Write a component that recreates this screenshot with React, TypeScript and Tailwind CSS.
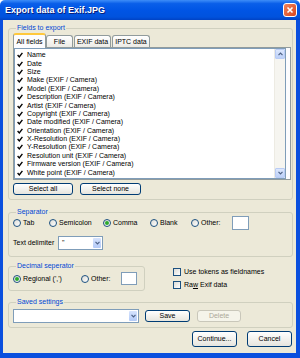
import React from 'react';

const fields = [
  'Name',
  'Date',
  'Size',
  'Make (EXIF / Camera)',
  'Model (EXIF / Camera)',
  'Description (EXIF / Camera)',
  'Artist (EXIF / Camera)',
  'Copyright (EXIF / Camera)',
  'Date modified (EXIF / Camera)',
  'Orientation (EXIF / Camera)',
  'X-Resolution (EXIF / Camera)',
  'Y-Resolution (EXIF / Camera)',
  'Resolution unit (EXIF / Camera)',
  'Firmware version (EXIF / Camera)',
  'White point (EXIF / Camera)',
];

function Check() {
  return (
    <svg width="6" height="6" viewBox="0 0 6 6" className="shrink-0">
      <path d="M0.6 3.1 L2.3 4.9 L5.4 0.9" fill="none" stroke="#000" strokeWidth="1.4" />
    </svg>
  );
}

function Radio({ checked, label, className }: { checked?: boolean; label: string; className?: string }) {
  return (
    <div className={`flex items-center gap-[2px] ${className ?? ''}`}>
      <span className="w-[8px] h-[8px] rounded-full border border-[#1C5180] bg-gradient-to-br from-[#DCDCD7] to-white flex items-center justify-center shrink-0">
        {checked && <span className="w-[4px] h-[4px] rounded-full bg-[#2DAA2D]" />}
      </span>
      <span>{label}</span>
    </div>
  );
}

function CheckBox({ children }: { children: React.ReactNode }) {
  return (
    <div className="flex items-center gap-[3px] h-[8px]">
      <span className="w-[8px] h-[8px] border border-[#1C5180] bg-gradient-to-br from-[#DCDCD7] to-white shrink-0" />
      <span>{children}</span>
    </div>
  );
}

function XPButton({ children, className, disabled }: { children: React.ReactNode; className?: string; disabled?: boolean }) {
  return (
    <div
      className={`rounded-[3px] border flex items-center justify-center shrink-0 ${
        disabled
          ? 'border-[#C9C7BA] bg-[#F5F4EA] text-[#ACA899]'
          : 'border-[#003C74] bg-gradient-to-b from-white to-[#E6E5DE] text-black'
      } ${className ?? ''}`}
    >
      {children}
    </div>
  );
}

function DownArrow() {
  return (
    <svg width="5" height="4" viewBox="0 0 5 4">
      <path d="M0.5 0.8 L2.5 2.8 L4.5 0.8" fill="none" stroke="#4D6185" strokeWidth="1.2" />
    </svg>
  );
}

function UpArrow() {
  return (
    <svg width="5" height="4" viewBox="0 0 5 4">
      <path d="M0.5 3.2 L2.5 1.2 L4.5 3.2" fill="none" stroke="#4D6185" strokeWidth="1.2" />
    </svg>
  );
}

function Combo({ value, className }: { value?: string; className?: string }) {
  return (
    <div className={`h-[14px] border border-[#7F9DB9] bg-white flex shrink-0 ${className ?? ''}`}>
      <span className="flex-1 pl-[3px] leading-[12px]">{value}</span>
      <span className="w-[8px] m-[1px] rounded-[1px] bg-gradient-to-b from-[#D6E3FD] to-[#B3CAF7] flex items-center justify-center">
        <DownArrow />
      </span>
    </div>
  );
}

function TextBox({ className }: { className?: string }) {
  return <div className={`border border-[#7F9DB9] bg-white shrink-0 ${className ?? ''}`} />;
}

function Group({ title, className, children }: { title: string; className?: string; children: React.ReactNode }) {
  return (
    <fieldset className={`border border-[#D0D0BF] rounded-[3px] ${className ?? ''}`}>
      <legend className="ml-[3px] px-[1px] text-[#0046D5] leading-[8px]">{title}</legend>
      {children}
    </fieldset>
  );
}

export default function App() {
  return (
    <div className="w-[300px] h-[358px] flex flex-col font-['Liberation_Sans',Arial,sans-serif] text-[7px] leading-[8px] text-black">
      <div className="h-[20px] shrink-0 flex items-center justify-between pl-[5px] pr-[3px] rounded-t-[5px] bg-[linear-gradient(to_bottom,#3E8DF8_0%,#0A5FE9_18%,#0055E5_50%,#0052DD_85%,#0042C4_100%)]">
        <span className="text-white font-bold text-[9px] [text-shadow:1px_1px_0_#0A1E78]">Export data of Exif.JPG</span>
        <div className="w-[14px] h-[14px] rounded-[3px] border border-white bg-gradient-to-br from-[#F0825A] to-[#D9441A] flex items-center justify-center">
          <svg width="8" height="8" viewBox="0 0 8 8">
            <path d="M1.5 1.5 L6.5 6.5 M6.5 1.5 L1.5 6.5" stroke="#fff" strokeWidth="1.6" />
          </svg>
        </div>
      </div>

      <div className="flex-1 flex flex-col bg-[#ECE9D8] border-l-[3px] border-r-[4px] border-b-[5px] border-[#0A4FDE] pl-[5px] pr-[3px] pt-[4px]">
        <Group title="Fields to export" className="pl-[4px] pr-[1px] pt-[1px] pb-[4px]">
          <div className="flex items-end h-[14px]">
            <div className="relative z-10 -mb-px h-[15px] w-[33px] flex items-center justify-center bg-[#FCFCFE] border-x border-[#919B9C] rounded-t-[3px] border-t-[2px] border-t-[#FFC83C]">
              All fields
            </div>
            <div className="h-[12px] w-[27px] flex items-center justify-center bg-gradient-to-b from-white to-[#ECEBE6] border border-b-0 border-[#919B9C] rounded-t-[3px]">
              File
            </div>
            <div className="h-[12px] w-[37px] ml-[1px] flex items-center justify-center bg-gradient-to-b from-white to-[#ECEBE6] border border-b-0 border-[#919B9C] rounded-t-[3px]">
              EXIF data
            </div>
            <div className="h-[12px] w-[38px] ml-[1px] flex items-center justify-center bg-gradient-to-b from-white to-[#ECEBE6] border border-b-0 border-[#919B9C] rounded-t-[3px]">
              IPTC data
            </div>
          </div>
          <div className="border border-[#919B9C] bg-[#FCFCFE] pr-[4px]">
            <div className="h-[131px] border border-[#7F9DB9] bg-white flex">
              <div className="flex-1 pt-[2px] pl-[2px]">
                {fields.map((f) => (
                  <div key={f} className="h-[8.4px] flex items-center gap-[4px] whitespace-nowrap">
                    <Check />
                    <span>{f}</span>
                  </div>
                ))}
              </div>
              <div className="w-[11px] flex flex-col bg-[#F6F5F0] border-l border-[#EDEBE3]">
                <div className="h-[10px] rounded-[1px] border border-[#B9CCF5] bg-gradient-to-b from-[#DCE7FD] to-[#BCD0F8] flex items-center justify-center">
                  <UpArrow />
                </div>
                <div className="flex-1" />
                <div className="h-[10px] rounded-[1px] border border-[#B9CCF5] bg-gradient-to-b from-[#DCE7FD] to-[#BCD0F8] flex items-center justify-center">
                  <DownArrow />
                </div>
              </div>
            </div>
          </div>
          <div className="flex gap-[7px] mt-[3px]">
            <XPButton className="w-[60px] h-[12px]">Select all</XPButton>
            <XPButton className="w-[61px] h-[12px]">Select none</XPButton>
          </div>
        </Group>

        <Group title="Separator" className="mt-[8px] pl-[4px] pb-[6px]">
          <div className="flex items-center h-[14px]">
            <Radio label="Tab" className="w-[36px]" />
            <Radio label="Semicolon" className="w-[54px]" />
            <Radio label="Comma" checked className="w-[47px]" />
            <Radio label="Blank" className="w-[41px]" />
            <Radio label="Other:" className="w-[41px]" />
            <TextBox className="w-[17px] h-[14px]" />
          </div>
          <div className="flex items-center h-[14px] mt-[6px]">
            <span className="w-[45px]">Text delimiter</span>
            <Combo value={'"'} className="w-[45px]" />
          </div>
        </Group>

        <div className="flex mt-[5px]">
          <Group title="Decimal seperator" className="w-[137px] pl-[4px] pt-[2px] pb-[5px]">
            <div className="flex items-center h-[13px]">
              <Radio label="Regional (',')" checked className="w-[68px]" />
              <Radio label="Other:" className="w-[40px]" />
              <TextBox className="w-[16px] h-[13px]" />
            </div>
          </Group>
          <div className="ml-[28px] pt-[6px] flex flex-col gap-[5px]">
            <CheckBox>Use tokens as fieldnames</CheckBox>
            <CheckBox>
              Ra<span className="underline">w</span> Exif data
            </CheckBox>
          </div>
        </div>

        <Group title="Saved settings" className="mt-[7px] pl-[4px] pt-[3px] pb-[4px]">
          <div className="flex items-center h-[14px]">
            <Combo className="w-[126px]" />
            <XPButton className="ml-[6px] w-[45px] h-[12px]">Save</XPButton>
            <XPButton disabled className="ml-[7px] w-[44px] h-[12px]">Delete</XPButton>
          </div>
        </Group>

        <div className="flex justify-end gap-[10px] mt-[3px] pr-[1px]">
          <XPButton className="w-[45px] h-[16px]">Continue...</XPButton>
          <XPButton className="w-[45px] h-[16px]">Cancel</XPButton>
        </div>
      </div>
    </div>
  );
}
